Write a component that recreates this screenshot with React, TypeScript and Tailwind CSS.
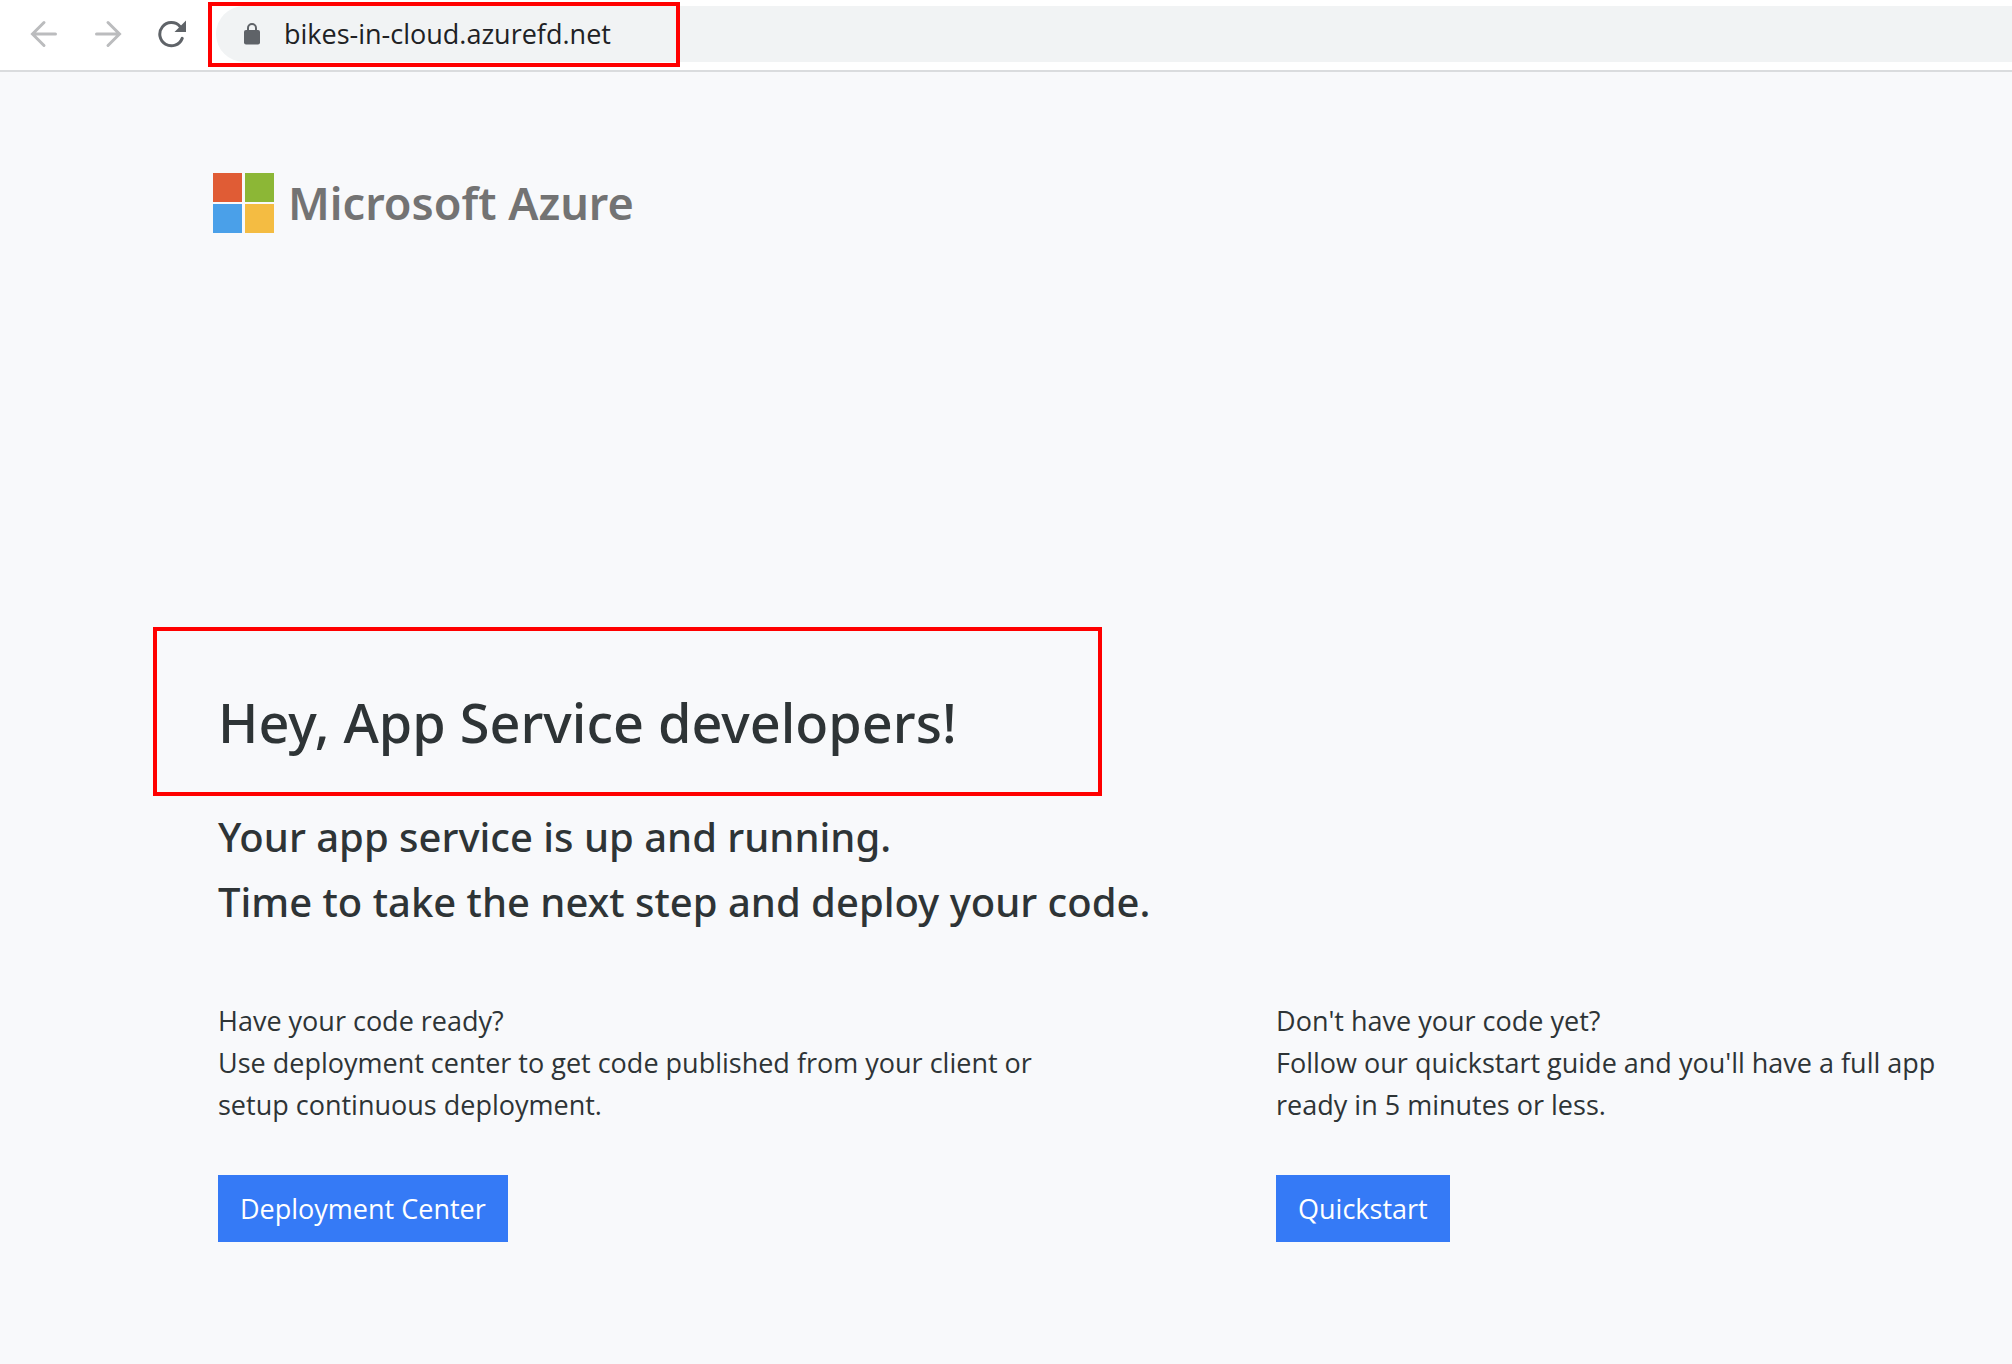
import React from "react";

function BackIcon() {
  return (
    <svg width="28" height="28" viewBox="0 0 28 28" fill="none" stroke="currentColor" strokeWidth="3" strokeLinecap="round" aria-hidden="true">
      <path d="M25.5 14H3M14 2.5L2.5 14L14 25.5" />
    </svg>
  );
}

function ForwardIcon() {
  return (
    <svg width="28" height="28" viewBox="0 0 28 28" fill="none" stroke="currentColor" strokeWidth="3" strokeLinecap="round" aria-hidden="true">
      <path d="M2.5 14H25M14 2.5L25.5 14L14 25.5" />
    </svg>
  );
}

function ReloadIcon() {
  return (
    <svg width="28" height="28" viewBox="0 0 28 28" aria-hidden="true">
      <path d="M24.2 18.4A11.6 11.6 0 1 1 22 6.4" fill="none" stroke="currentColor" strokeWidth="3" strokeLinecap="round" />
      <path d="M28 0.5V12H16.5Z" fill="currentColor" />
    </svg>
  );
}

function LockIcon() {
  return (
    <svg width="16" height="22" viewBox="0 0 16 22" className="shrink-0" aria-hidden="true">
      <rect x="0" y="7" width="16" height="14.5" rx="2" fill="#5f6368" />
      <path d="M4 8V5a4 4 0 0 1 8 0V8" fill="none" stroke="#5f6368" strokeWidth="2" />
    </svg>
  );
}

function MicrosoftLogo() {
  return (
    <svg width="61" height="60" viewBox="0 0 61 60" className="shrink-0" aria-hidden="true">
      <rect x="0" y="0" width="29" height="29" fill="#e05c35" />
      <rect x="32" y="0" width="29" height="29" fill="#8cb736" />
      <rect x="0" y="31" width="29" height="29" fill="#4aa0e9" />
      <rect x="32" y="31" width="29" height="29" fill="#f4bc42" />
    </svg>
  );
}

function Toolbar() {
  return (
    <header className="flex h-[72px] items-start border-b-2 border-[#dadcde] bg-white">
      <nav aria-label="Browser" className="flex h-[68px] w-[208px] shrink-0 items-center gap-9 pl-[30px]">
        <button type="button" aria-label="Back" className="text-[#bbbcbe]"><BackIcon /></button>
        <button type="button" aria-label="Forward" className="text-[#bbbcbe]"><ForwardIcon /></button>
        <button type="button" aria-label="Reload" className="text-[#5f6368]"><ReloadIcon /></button>
      </nav>
      <div className="relative mt-1.5 ml-2 flex h-14 flex-1 items-center gap-6 rounded-l-full bg-[#f1f3f4] pl-7">
        <LockIcon />
        <input
          aria-label="Address"
          defaultValue="bikes-in-cloud.azurefd.net"
          className="min-w-0 flex-1 bg-transparent text-[27px] leading-9 text-[#202124] outline-none"
        />
        <div className="pointer-events-none absolute -top-1 -left-2 h-[65px] w-[472px] border-4 border-[#ff0000]" />
      </div>
    </header>
  );
}

type OptionProps = { title: string; text: string; action: string; className: string };

function Option({ title, text, action, className }: OptionProps) {
  return (
    <section className={className}>
      <h3>{title}</h3>
      <p>{text}</p>
      <a href="#" className="mt-[49px] inline-block bg-[#357af6] px-[22px] pt-[13px] pb-3 text-white">{action}</a>
    </section>
  );
}

export default function App() {
  return (
    <div className="min-h-screen bg-[#f8f9fb] font-['Open_Sans',sans-serif] text-[#2e3436]">
      <Toolbar />
      <main className="pr-12 pl-[218px]">
        <div className="-ml-[5px] flex items-center gap-3.5 pt-[101px] font-['Noto_Sans',sans-serif]">
          <MicrosoftLogo />
          <span className="text-[45px] leading-[60px] font-semibold text-[#737373]">Microsoft Azure</span>
        </div>
        <div className="mt-[394px] -ml-[65px] flex h-[169px] w-[949px] items-center border-4 border-[#ff0000] pt-5 pl-[61px] font-['Noto_Sans',sans-serif]">
          <h1 className="text-[54px] leading-[72px] font-medium whitespace-nowrap">Hey, App Service developers!</h1>
        </div>
        <h2 className="mt-2 font-['Noto_Sans',sans-serif] text-[40px] leading-[65px] font-medium">
          Your app service is up and running.
          <br />
          Time to take the next step and deploy your code.
        </h2>
        <div className="mt-[66px] flex text-[27px] leading-[42px]">
          <Option
            className="w-[60.6%] shrink-0 pr-[200px]"
            title="Have your code ready?"
            text="Use deployment center to get code published from your client or setup continuous deployment."
            action="Deployment Center"
          />
          <Option
            className="flex-1"
            title="Don't have your code yet?"
            text="Follow our quickstart guide and you'll have a full app ready in 5 minutes or less."
            action="Quickstart"
          />
        </div>
      </main>
    </div>
  );
}
